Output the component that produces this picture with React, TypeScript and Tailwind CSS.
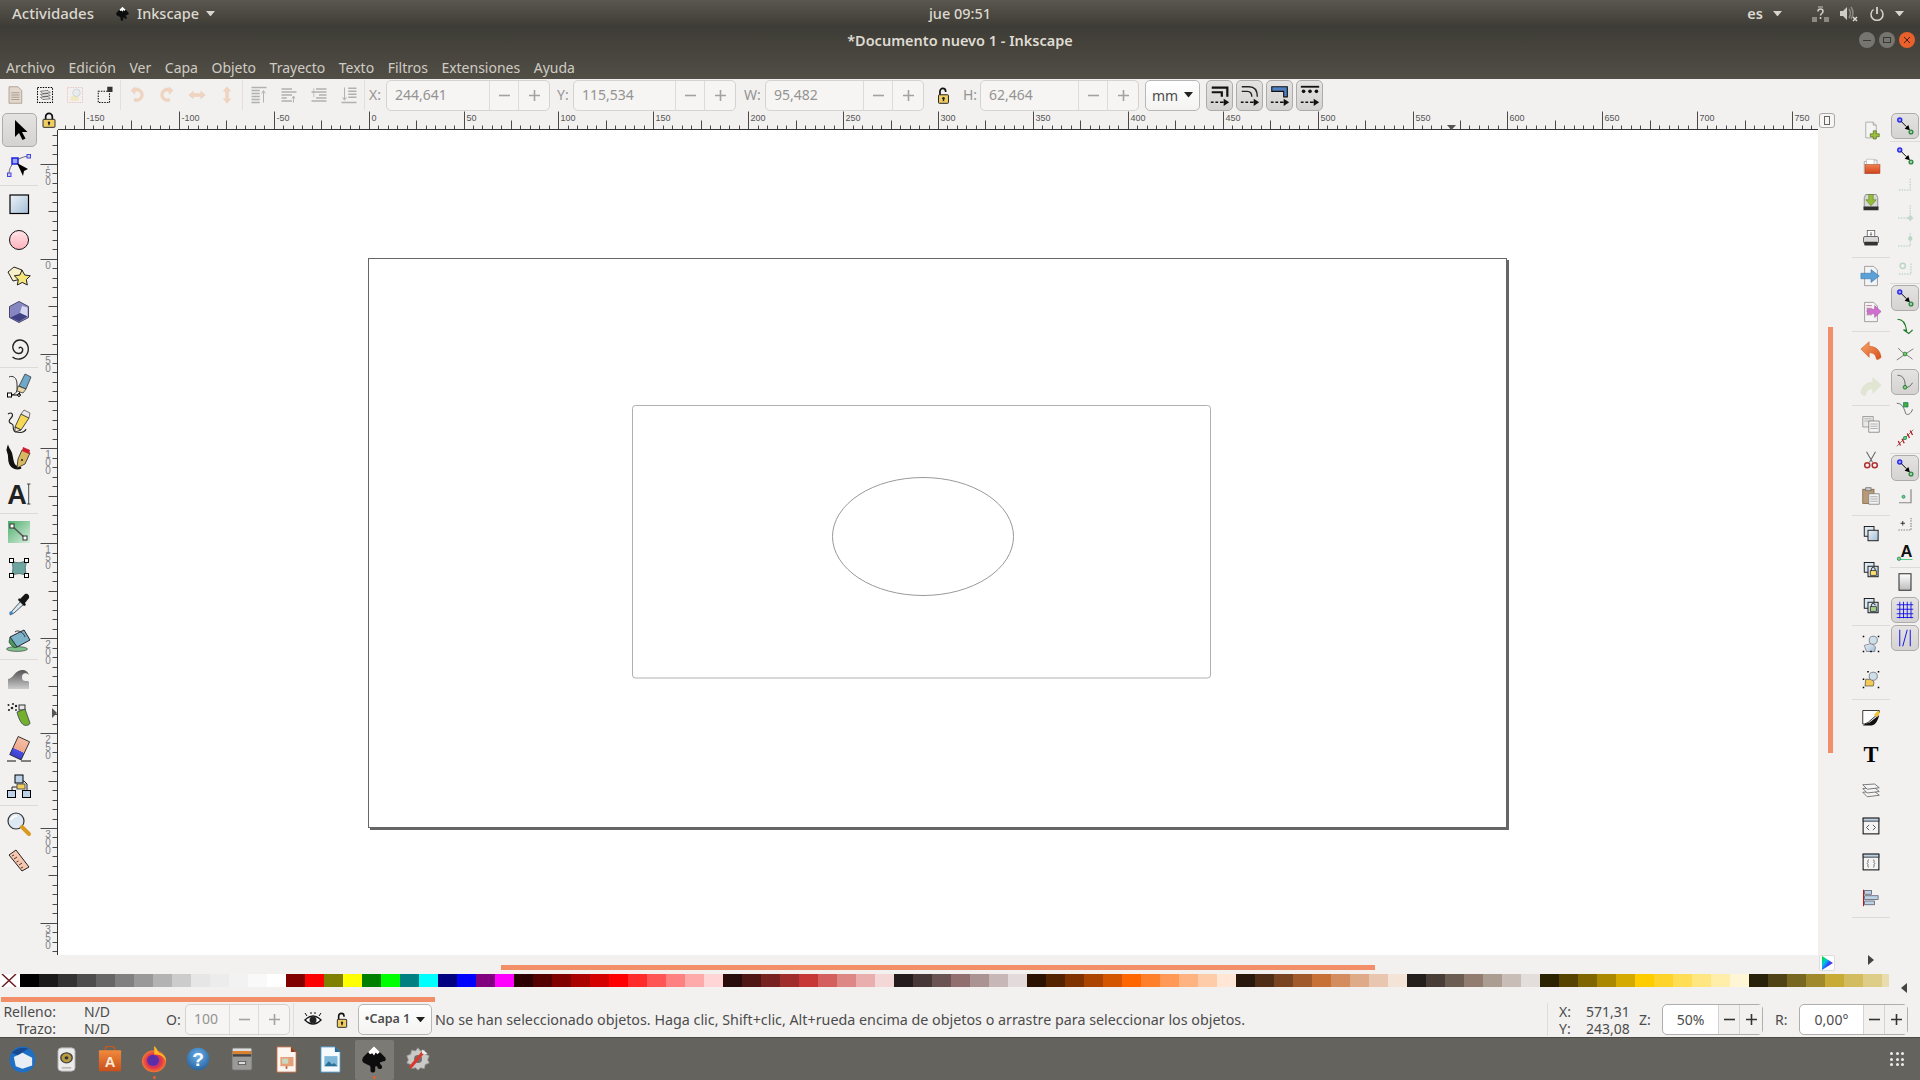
import React from "react";

const G = ["000000","1a1a1a","333333","4d4d4d","666666","808080","999999","b3b3b3","cccccc","e6e6e6","ececec","f2f2f2","f9f9f9","ffffff","800000","ff0000","808000","ffff00","008000","00ff00","008080","00ffff","000080","0000ff","800080","ff00ff","2b0000","550000","800000","aa0000","d40000","ff0000","ff2a2a","ff5555","ff8080","ffaaaa","ffd5d5","280b0b","501616","782121","a02c2c","c83737","d35f5f","de8787","e9afaf","f4d7d7","241c1c","483737","6c5353","916f6f","ac9393","c8b7b7","e3dbdb","2b1100","552200","803300","aa4400","d45500","ff6600","ff7f2a","ff9955","ffb380","ffccaa","ffe6d5","28170b","502d16","784421","a05a2c","c87137","d38d5f","deaa87","e9c6af","f4e3d7","241f1c","483e37","6c5d53","917c6f","ac9d93","c8beb7","e3dedb","2b2200","554400","806600","aa8800","d4aa00","ffcc00","ffd42a","ffdd55","ffe680","ffeeaa","fff6d5","28220b","504416","786721","a0892c","c8ab37","d3bc5f","decd87","e9ddaf"];

const S = ({ children, s = 24, o = 1 }: { children: React.ReactNode; s?: number; o?: number }) => (
  <svg width={s} height={s} viewBox="0 0 24 24" opacity={o} className="shrink-0 overflow-visible">{children}</svg>
);

const Defs = () => (
  <svg className="absolute w-0 h-0">
    <defs>
      <linearGradient id="blue" x1="0" y1="0" x2="1" y2="1"><stop offset="0" stopColor="#eef3f8" /><stop offset="1" stopColor="#a2bdd6" /></linearGradient>
      <linearGradient id="pink" x1="0" y1="0" x2="0" y2="1"><stop offset="0" stopColor="#ffe5e8" /><stop offset="1" stopColor="#ffb2bd" /></linearGradient>
      <linearGradient id="green" x1="0" y1="0" x2="1" y2="1"><stop offset="0" stopColor="#4fae6c" /><stop offset="1" stopColor="#d9efdf" /></linearGradient>
      <linearGradient id="erase" x1="0" y1="0" x2="0" y2="1"><stop offset="0" stopColor="#f3bfa6" /><stop offset="0.62" stopColor="#f0a88a" /><stop offset="0.63" stopColor="#4a50e8" /><stop offset="1" stopColor="#3a3ec8" /></linearGradient>
      <linearGradient id="wave" x1="0" y1="0" x2="0" y2="1"><stop offset="0" stopColor="#555" /><stop offset="1" stopColor="#ccc" /></linearGradient>
      <linearGradient id="btn" x1="0" y1="0" x2="0" y2="1"><stop offset="0" stopColor="#fff" /><stop offset="1" stopColor="#bbb" /></linearGradient>
      <linearGradient id="undo" x1="0" y1="0" x2="1" y2="1"><stop offset="0" stopColor="#f7a66a" /><stop offset="1" stopColor="#d8501a" /></linearGradient>
      <linearGradient id="wheel" x1="0" y1="0" x2="1" y2="1"><stop offset="0" stopColor="#00e000" /><stop offset="0.35" stopColor="#00c8e0" /><stop offset="0.6" stopColor="#3040ff" /><stop offset="1" stopColor="#ff2060" /></linearGradient>
      <linearGradient id="bag" x1="0" y1="0" x2="0" y2="1"><stop offset="0" stopColor="#f08a3c" /><stop offset="1" stopColor="#c9501a" /></linearGradient>
      <linearGradient id="folder" x1="0" y1="0" x2="0" y2="1"><stop offset="0" stopColor="#f08050" /><stop offset="1" stopColor="#d0441c" /></linearGradient>
      <radialGradient id="help" cx="0.5" cy="0.35" r="0.7"><stop offset="0" stopColor="#6fb0e8" /><stop offset="1" stopColor="#20609e" /></radialGradient>
      <radialGradient id="fox" cx="0.5" cy="0.5" r="0.6"><stop offset="0" stopColor="#7a3cc8" /><stop offset="0.5" stopColor="#e0334d" /><stop offset="1" stopColor="#ff9a1f" /></radialGradient>
    </defs>
  </svg>
);

/* ---------- tools ---------- */
const tools: Record<string, React.ReactNode> = {
  select: <S><path d="M7 2v17l4-4 3.500 7 3-1.500-3.500-6.500h5.500z" fill="#000" /></S>,
  node: <S><path d="M2 20C2 11 9 4 21 2" fill="none" stroke="#667" /><rect x="5" y="4" width="6" height="6" fill="#9aa8f0" stroke="#1f1fe0" strokeWidth="1.500" /><rect x="20" y="0.500" width="3.500" height="3.500" fill="#ccd" stroke="#44e" /><rect x="0.500" y="19" width="3.500" height="3.500" fill="#ccd" stroke="#44e" /><path d="M10 9l11 6-4 2-1 5z" fill="#000" /></S>,
  rect: <S><rect x="3" y="3" width="18.500" height="18.500" fill="url(#blue)" stroke="#000" strokeWidth="1.200" /></S>,
  circle: <S><circle cx="12" cy="12" r="9.500" fill="url(#pink)" stroke="#111" strokeWidth="1" /></S>,
  star: <S><path d="M1 8l6-5 8 3-1 9-8 2z" fill="#f7f0c8" stroke="#222" /><path d="M15 6l2.700 5 5.600.8-4 3.800 1 5.400-5-2.600-5 2.600 1-5.400-4-3.800 5.600-.8z" fill="#f5e57a" stroke="#222" /></S>,
  cube: <S><path d="M12 1.500l9.500 5v11l-9.500 5-9.500-5v-11z" fill="#8d8dc6" stroke="#444466" /><path d="M3.500 7l8.500-4.500 3 3.500-2 7-9 4.500z" fill="#8686c2" /><path d="M13 13l2-7 5.500 1.500v9z" fill="#d6d6ee" /><path d="M3.500 17.500l9.500-4.500 7.500 3.500-8.500 5z" fill="#3f3f84" /></S>,
  spiral: <S><path d="M12 12.500c.5-2.500 4.500-1 3.500 2.500s-7 3.500-9-1 1-10.500 7-10 9.500 7 7 13-10 8-15 4" fill="none" stroke="#222" strokeWidth="1.400" /></S>,
  pen: <S><path d="M2 3c4-2 8 1 8 7s1 9-5 11" fill="none" stroke="#333" /><rect x="0.500" y="19" width="4" height="4" fill="#fff" stroke="#000" /><path d="M4 21h8" stroke="#000" /><circle cx="12" cy="21" r="1.400" fill="#fff" stroke="#000" /><path d="M12 21l2-7" stroke="#000" /><path d="M18 0l6 3-5 12-7-3z" fill="#6fa8c8" stroke="#222" strokeWidth=".7" /><path d="M11 12l8 3-3 4-6-2z" fill="#e8d8a8" stroke="#222" strokeWidth=".7" /></S>,
  pencil: <S><path d="M1 4c4-3 6 1 3 4s-2 5 1 6-1 7 4 8 9 0 10-3" fill="none" stroke="#222" strokeWidth="1.100" /><path d="M14 4l8 4-8 12-6-3z" fill="#f5d856" stroke="#222" strokeWidth=".8" /><path d="M8 17l6 3-6 2z" fill="#f5e8c8" stroke="#222" strokeWidth=".8" /><path d="M17 0l6 3-1 5-8-4z" fill="#e8e8e8" stroke="#222" strokeWidth=".6" /></S>,
  calli: <S><path d="M1 1c2 5 3 3 4 10s2 10 9 11c-7 2-12-2-12-10S-1 6 1 1z" fill="#111" stroke="#111" strokeWidth="1.800" /><path d="M15 4l8 3-5 11-8 4 1-9z" fill="#d8b860" stroke="#222" strokeWidth=".8" /><path d="M16 1l7 3-1 4-7-3z" fill="#d02030" /><circle cx="15" cy="14" r="1" fill="#222" /></S>,
  text: <S><text x="10" y="22" textAnchor="middle" fontFamily="Liberation Sans" fontWeight="700" fontSize="27" fill="#222">A</text><path d="M20 2h3.500M21.700 2v20M20 22h3.500" stroke="#222" fill="none" strokeWidth=".8" /></S>,
  gradient: <S><rect x="1" y="1" width="22" height="22" fill="url(#green)" /><path d="M5 6l13 12" stroke="#555" strokeWidth="1.600" /><rect x="3" y="4" width="4" height="4" fill="#fff" stroke="#333" /><rect x="16" y="16" width="4" height="4" fill="#fff" stroke="#333" /></S>,
  mesh: <S><path d="M5 5q7 4 15-1-3 7-1 15-7-3-14 0 2-7 0-14z" fill="#6fa5a0" stroke="#244" strokeWidth=".6" /><g fill="#fff" stroke="#000" strokeWidth="1"><rect x="2.500" y="2.500" width="4" height="4" /><rect x="17.500" y="2.500" width="4" height="4" /><rect x="2.500" y="17.500" width="4" height="4" /><rect x="17.500" y="17.500" width="4" height="4" /></g></S>,
  dropper: <S><path d="M14 9l-9 10-2 4 4-2 10-9z" fill="#dce8f0" stroke="#234" strokeWidth=".8" /><circle cx="4" cy="21" r="1.800" fill="#4488c0" /><path d="M13 7l5-5c2-1 5 1 4 4l-4 5 1 2-2 1-6-6 1-2z" fill="#151515" /></S>,
  bucket: <S><ellipse cx="10" cy="21" rx="10.500" ry="2.400" fill="#7ec08a" stroke="#333" strokeWidth=".6" /><path d="M3 9l14-7 6 10-13 7z" fill="#7db3c8" stroke="#223" /><path d="M3 9l7 10c-2 2-6-1-8-5z" fill="#4a9a5c" stroke="#223" strokeWidth=".6" /><path d="M8 4c3-3 9 1 10 5" fill="none" stroke="#333" /></S>,
  tweak: <S><path d="M1 23V13c5 0 7-9 14-9 4 0 6 2 7 5-3-3-7-2-7 2s2 4 6 4l1 1v7z" fill="url(#wave)" /></S>,
  spray: <S><g fill="#222"><circle cx="1.500" cy="3" r="1" /><circle cx="6" cy="2" r="1" /><circle cx="5" cy="6" r="1.300" /><circle cx="9" cy="4" r="1.200" /><circle cx="2" cy="8" r="1.100" /><circle cx="9" cy="8" r=".9" /></g><rect x="12" y="3" width="6" height="5" fill="#e8e8e8" stroke="#333" /><path d="M10 10l8-3 5 14c0 2-4 3-6 2-3-1-6-8-7-13z" fill="#74b02e" stroke="#234" strokeWidth=".7" /></S>,
  eraser: <S><g transform="rotate(25 12 11)"><rect x="6" y="0" width="12.500" height="20" fill="url(#erase)" stroke="#222" strokeWidth=".8" /></g><path d="M0 23h9M14 23h10" stroke="#111" /></S>,
  connector: <S><path d="M12 10v3H5v4M12 7h5l3 3v7M12 13h4" stroke="#222" fill="none" /><rect x="8" y="1" width="8" height="8" fill="#bdd2e6" stroke="#000" /><rect x="10" y="10" width="8" height="5" fill="#f3cf58" stroke="#555" /><rect x="0.500" y="16.500" width="8" height="7" fill="#bdd2e6" stroke="#000" /><rect x="15.500" y="16.500" width="8" height="7" fill="#bdd2e6" stroke="#000" /></S>,
  zoom: <S><circle cx="9" cy="9" r="8" fill="#dce8f2" stroke="#333" strokeWidth="1.200" /><path d="M15 15l7 7" stroke="#d89a20" strokeWidth="4" strokeLinecap="round" /><path d="M4 8c1-3 3-4 6-4" stroke="#fff" strokeWidth="2" fill="none" /></S>,
  measure: <S><path d="M2 7l7-5 13 17-7 4z" fill="#f4c7ae" stroke="#222" /><path d="M5 8l2-1M7 11l3-2M9.500 14l2-1M12 17l3-2M14 20l2-1" stroke="#533" /></S>,
};

const toolOrder: (string | null)[] = ["node", null, "rect", "circle", "star", "cube", "spiral", null, "pen", "pencil", "calli", "text", null, "gradient", "mesh", "dropper", "bucket", null, "tweak", "spray", "eraser", "connector", null, "zoom", "measure"];

/* ---------- command bar ---------- */
const Doc = () => <path d="M5 1.500h10l4 4v17H5z" fill="#f4f4f4" stroke="#999" />;
const Copies = ({ extra }: { extra?: React.ReactNode }) => <S><rect x="3" y="2" width="13" height="13" fill="#dbe7f1" stroke="#111" strokeWidth="1.200" /><rect x="8" y="7" width="13.500" height="14" fill="url(#blue)" stroke="#111" strokeWidth="1.200" />{extra}</S>;

const cmds: Record<string, React.ReactNode> = {
  new: <S><Doc /><path d="M15 1.500v4h4" fill="#ddd" stroke="#999" /><path d="M15 13h4v4h4v4h-4v3h-4v-3h-4v-4h4z" fill="#9cbf3c" stroke="#456010" strokeWidth=".8" /></S>,
  open: <S><path d="M3 6h8l2-2h7v18H3z" fill="#f4f4f4" stroke="#999" /><path d="M6 3h10v8H6z" fill="#fff" stroke="#bbb" /><rect x="4" y="10" width="20" height="12" fill="url(#folder)" stroke="#a5391a" strokeWidth=".6" /></S>,
  save: <S><path d="M3 20V6l2-4h14l2 4v14z" fill="#d8d8d8" stroke="#777" /><rect x="2" y="18" width="20" height="5" fill="#2f2f2f" /><path d="M9 2h6v7h4l-7 8-7-8h4z" fill="#95bd3a" stroke="#55781a" strokeWidth=".7" /></S>,
  print: <S><rect x="7" y="2" width="10" height="9" fill="#fff" stroke="#555" /><path d="M12 4v4M10.500 6.500l1.500 2 1.500-2" stroke="#555" fill="none" /><rect x="2" y="10" width="20" height="9" rx="2" fill="#d9d9d9" stroke="#444" /><rect x="3" y="17" width="18" height="5" rx="1" fill="#333" /></S>,
  import: <S><Doc /><path d="M1 9h11V5l9 7-9 7v-4H1z" fill="#5ba0d6" stroke="#2f6fa8" strokeWidth=".6" /></S>,
  export: <S><Doc /><path d="M7 5h6M7 8h6M7 11h5M7 15h6" stroke="#b79" /><path d="M8 9h8V5l7 6.500-7 6.500v-4H8z" fill="#d06fd0" stroke="#a24ba2" strokeWidth=".6" /></S>,
  undo: <S><path d="M1 11l9-8v5c7 0 12 4 13 12-1 1-3 3-5 2-1-5-3-7-8-7v5z" fill="url(#undo)" stroke="#c8501a" strokeWidth=".6" /></S>,
  redo: <S o={.28}><path d="M23 11l-9-8v5C7 8 2 12 1 20c1 1 3 3 5 2 1-5 3-7 8-7v5z" fill="#b9cc8a" stroke="#9ab060" strokeWidth=".6" /></S>,
  copy: <S><path d="M1 2h14v14H1z" fill="#e8e8e8" stroke="#888" /><path d="M3 5h10M3 8h10" stroke="#aaa" /><path d="M9 8h14v15H9z" fill="#f4f4f4" stroke="#777" /><path d="M11 12h10M11 15h10M11 18h10" stroke="#999" /></S>,
  cut: <S><path d="M6 1l8 14M18 1l-8 14" stroke="#666" strokeWidth="1.400" /><circle cx="7" cy="19" r="3.400" fill="none" stroke="#b03030" strokeWidth="2" /><circle cx="17" cy="19" r="3.400" fill="none" stroke="#b03030" strokeWidth="2" /></S>,
  paste: <S><rect x="1" y="3" width="15" height="19" fill="#b99a78" stroke="#7d6040" /><rect x="5" y="1" width="7" height="4" fill="#ccc" stroke="#666" /><path d="M9 9h14v14H9z" fill="#f4f4f4" stroke="#777" /><path d="M11 13h10M11 16h10M11 19h10" stroke="#999" /></S>,
  dup: <Copies />,
  clone: <Copies extra={<><rect x="11" y="13" width="8" height="6" fill="#ffdf70" stroke="#000" strokeWidth=".8" /><path d="M12.500 13v-2a2.500 2.500 0 015 0v2" fill="none" stroke="#000" /></>} />,
  unlink: <Copies extra={<><rect x="11" y="13" width="8" height="6" fill="#a8d088" stroke="#000" strokeWidth=".8" /><path d="M12.500 13v-2a2.500 2.500 0 015 0" fill="none" stroke="#000" /></>} />,
  group: <S><path d="M3 14l10-3 5 5-1 6H6z" fill="url(#blue)" stroke="#445" strokeWidth=".7" /><circle cx="15" cy="7" r="5.400" fill="#cfdfea" stroke="#667" /><g fill="#000"><rect x="1" y="1" width="2" height="2" /><rect x="21" y="1" width="2" height="2" /><rect x="1" y="21" width="2" height="2" /><rect x="21" y="21" width="2" height="2" /><rect x="11" y="21" width="2" height="2" /></g></S>,
  ungroup: <S><path d="M5 11h8l3 4-1 5H4z" fill="#f3c958" stroke="#333" strokeWidth=".8" /><circle cx="15" cy="7" r="5.400" fill="#cfdfea" stroke="#667" /><g fill="#000"><rect x="7" y="0" width="2" height="2" /><rect x="21" y="0" width="2" height="2" /><rect x="1" y="21" width="2" height="2" /><rect x="21" y="21" width="2" height="2" /><rect x="1" y="10" width="2" height="2" /></g></S>,
  fill: <S><path d="M1 2h22v3L8 18l-5 2H1z" fill="#fff" stroke="#000" strokeWidth="1" /><path d="M1 22h12c5-1 8-6 10-14L10 18l-6 2z" fill="#111" /><path d="M16 8l5-6 3 3-4 6z" fill="#f2c230" /></S>,
  T: <S><text x="12" y="22" textAnchor="middle" fontFamily="Liberation Serif" fontWeight="700" fontSize="30" fill="#000">T</text></S>,
  layers: <S><g fill="#f4f4f4" stroke="#555"><path d="M1 15l16-1 6 5-16 2z" /><path d="M1 10l16-1 6 5-16 2z" /><path d="M1 5l16-1 6 5-16 2z" /></g></S>,
  xml: <S><rect x="1.500" y="1.500" width="21" height="21" fill="#f4f4f4" stroke="#111" strokeWidth="1.400" /><rect x="1.500" y="1.500" width="21" height="4" fill="#bcd0e2" stroke="#111" /><path d="M9.500 10.500L6 14l3.500 3.500M14.500 10.500L18 14l-3.500 3.500" fill="none" stroke="#555" strokeWidth="1.300" /></S>,
  style: <S><rect x="1.500" y="1.500" width="21" height="21" fill="#f4f4f4" stroke="#111" strokeWidth="1.400" /><rect x="1.500" y="1.500" width="21" height="4" fill="#bcd0e2" stroke="#111" /><path d="M9 9c-2 0-1 4-1 4l-1 1 1 1s-1 4 1 4M15 9c2 0 1 4 1 4l1 1-1 1s1 4-1 4" fill="none" stroke="#444" /></S>,
  align: <S><path d="M2 1v22" stroke="#b01c1c" strokeWidth="1.400" /><rect x="3.500" y="2" width="9" height="5" fill="#bcd2e6" stroke="#556" /><rect x="3.500" y="9" width="18" height="5" fill="#bcd2e6" stroke="#556" /><rect x="3.500" y="16" width="13" height="5" fill="#bcd2e6" stroke="#556" /></S>,
};

const cmdOrder: (string | null)[] = ["new", "open", "save", "print", null, "import", "export", null, "undo", "redo", null, "copy", "cut", "paste", null, "dup", "clone", "unlink", null, "group", "ungroup", null, "fill", "T", "layers", "xml", "style", "align", null];
const bigCmd = ["import", "export", "undo", "redo"];

/* ---------- snap bar ---------- */
const faint = "#c4d8cb";
const Snap = () => <S><circle cx="5" cy="4" r="2.600" fill="#aaf" stroke="#2a2af0" strokeWidth="2" /><path d="M7 6l7 7" stroke="#000" strokeWidth="1.300" /><path d="M18.500 17.500l-7-2 5-5z" fill="#000" /><circle cx="20" cy="20" r="2.500" fill="#aca" stroke="#2a8a40" strokeWidth="1.800" /></S>;
const snaps: Record<string, React.ReactNode> = {
  snap: <Snap />,
  f1: <S><path d="M4 20h15V4" fill="none" stroke={faint} strokeWidth="2" strokeDasharray="2 1.500" /></S>,
  f2: <S><path d="M3 20h16V3" fill="none" stroke={faint} strokeWidth="2" strokeDasharray="2 1.500" /><path d="M16 17h6v6h-6z" fill={faint} transform="rotate(45 19 20)" /></S>,
  f3: <S><path d="M3 20h16V3" fill="none" stroke={faint} strokeWidth="2" strokeDasharray="2 1.500" /><circle cx="19" cy="10" r="3" fill="#bcd6c4" /></S>,
  f4: <S><path d="M4 20h16V6" fill="none" stroke={faint} strokeWidth="2" strokeDasharray="2 1.500" /><circle cx="9" cy="9" r="3.500" fill="none" stroke="#bcd6c4" strokeWidth="2" /></S>,
  path: <S><path d="M2 3c7 0 11 6 12 15l-4-1 7 5c2-2 4-3 5-5" fill="none" stroke="#1d7a26" strokeWidth="1.600" /></S>,
  cross: <S><path d="M1 20L23 5M3 4c6 8 14 10 19 15" stroke="#666" strokeWidth="1.100" fill="none" /><circle cx="12" cy="12" r="2.500" fill="#6c6" stroke="#1d7a26" /></S>,
  curve: <S><path d="M2 3c8 0 11 7 10 17M22 13c-2 4-5 6-10 7" fill="none" stroke="#666" strokeWidth="1.300" /><circle cx="12" cy="19" r="2.500" fill="#8c8" stroke="#1d7a26" strokeWidth="1.200" /></S>,
  nodes: <S><path d="M1 3c8 0 10 8 12 14 2 2 7 1 9-6" fill="none" stroke="#666" strokeWidth="1.200" /><path d="M10 2h6v6h-6z" fill="#4a4" stroke="#185" /></S>,
  smooth: <S><path d="M1 23L23 1" stroke="#555" /><g stroke="#c01818" strokeWidth="1.700"><path d="M3 16l3 6M8 13l3 6M15 6l3 6M19 2l3 6" /></g><circle cx="12" cy="12" r="2.200" fill="#6c6" stroke="#186" /></S>,
  center: <S><path d="M4 21h16V3" fill="none" stroke="#888" strokeWidth="1.600" /><circle cx="10" cy="13" r="2" fill="#7c7" stroke="#186" /></S>,
  rot: <S><path d="M3 20h17V4" fill="none" stroke="#888" strokeWidth="1.600" strokeDasharray="2 1.500" /><path d="M9 8v6M6 11h6" stroke="#222" strokeWidth="1.200" /></S>,
  atext: <S><text x="14" y="19" textAnchor="middle" fontFamily="Liberation Sans" fontWeight="700" fontSize="22" fill="#111">A</text><path d="M2 22h20" stroke="#5c8" strokeWidth="1.400" /><circle cx="4" cy="21" r="2.300" fill="#8c8" stroke="#186" /></S>,
  page: <S><rect x="4" y="1" width="16" height="22" fill="url(#btn)" stroke="#333" strokeWidth="1.400" /></S>,
  grid: <S><path d="M1 5h22M1 11h22M1 17h22M1 22h22M5 1v22M10 1v22M15 1v22M20 1v22" stroke="#0000f0" strokeWidth="1.100" /></S>,
  guide: <S><path d="M5 1v22M19 1v22" stroke="#0000f0" strokeWidth="1.200" /><path d="M9 23L15 1" stroke="#0000f0" strokeWidth="1.200" /></S>,
};
type SnapItem = { k: string; on?: boolean } | null;
const snapOrder: SnapItem[] = [{ k: "snap", on: true }, null, { k: "snap" }, { k: "f1" }, { k: "f2" }, { k: "f3" }, { k: "f4" }, null, { k: "snap", on: true }, { k: "path" }, { k: "cross" }, { k: "curve", on: true }, { k: "nodes" }, { k: "smooth" }, null, { k: "snap", on: true }, { k: "center" }, { k: "rot" }, { k: "atext" }, null, { k: "page" }, { k: "grid", on: true }, { k: "guide", on: true }];

/* ---------- top toolbar ---------- */
const Dash = "2 1.500";
const topA = [
  <S key="a"><path d="M4 1h12l5 5v17H4z" fill="#e3d8cd" stroke="#a08f80" /><path d="M7 9h11M7 12h11M7 15h11M7 18h11" stroke="#9a8a7b" /></S>,
  <S key="b"><rect x="2" y="2" width="20" height="20" fill="none" stroke="#000" strokeWidth="1.400" strokeDasharray={Dash} /><path d="M6 7l10-1 3 3-10 1zM6 11l10-1 3 3-10 1zM6 15l10-1 3 3-10 1z" fill="#eee" stroke="#333" strokeWidth=".8" /></S>,
  <S key="c" o={.55}><rect x="2" y="2" width="20" height="20" fill="none" stroke="#d88" strokeDasharray={Dash} /><path d="M6 14l8-2 3 4v4H6z" fill="#f3e2a0" /><circle cx="14" cy="9" r="5" fill="#dfe8ee" stroke="#aab" /></S>,
  <S key="d"><rect x="3" y="7" width="15" height="15" fill="none" stroke="#111" strokeWidth="1.400" strokeDasharray={Dash} /><rect x="15" y="1" width="7" height="7" fill="#333" /></S>,
];
const RotIcon = ({ flip }: { flip?: boolean }) => <S o={.28}><g transform={flip ? "translate(24 0) scale(-1 1)" : undefined}><path d="M9 3a9 9 0 11-1 17l1-4a5 5 0 100-8v3L4 6l5-5z" fill="#ee8a44" stroke="#c8601c" strokeWidth=".5" /></g></S>;
const topB = [
  <RotIcon key="a" />, <RotIcon key="b" flip />,
  <S key="c" o={.28}><path d="M1 12l6-5v3h10V7l6 5-6 5v-3H7v3z" fill="#ee8a44" stroke="#c8601c" strokeWidth=".5" /></S>,
  <S key="d" o={.28}><path d="M12 1l5 6h-3v10h3l-5 6-5-6h3V7H7z" fill="#ee8a44" stroke="#c8601c" strokeWidth=".5" /></S>,
];
const ZL = "#b0b0ae";
const topC = [
  <S key="a"><path d="M2 2h20" stroke={ZL} strokeWidth="2" /><path d="M2 6h11M2 10h11M2 14h11M2 18h11M2 22h11" stroke={ZL} strokeWidth="2" /><path d="M18 22V7M15.500 10L18 6l2.500 4" stroke={ZL} strokeWidth="1.300" fill="none" /></S>,
  <S key="b"><path d="M2 4h14M2 8h20M2 12h14M2 16h7M2 20h14" stroke={ZL} strokeWidth="2" /><path d="M18 22v-8M16 16.500l2-3 2 3" stroke={ZL} strokeWidth="1.300" fill="none" /></S>,
  <S key="c"><path d="M8 4h14M2 8h20M12 12h10M8 16h14M2 20h20" stroke={ZL} strokeWidth="2" /><path d="M5 15V3" stroke={ZL} /></S>,
  <S key="d"><path d="M11 3h11M11 7h11M11 11h11M11 15h11" stroke={ZL} strokeWidth="2" /><path d="M2 22h20" stroke={ZL} strokeWidth="2" /><path d="M6 2v16M3.500 15L6 19l2.500-4" stroke={ZL} strokeWidth="1.300" fill="none" /></S>,
];
const ModeIcon = ({ v }: { v: number }) => (
  <S s={22}>
    {v === 0 && <path d="M3 4h17v10" fill="none" stroke="#111" strokeWidth="2.400" />}
    {v === 0 && <path d="M3 9h11v5" fill="none" stroke="#111" strokeWidth="2.400" />}
    {v === 1 && <path d="M3 3h8c6 0 9 4 9 11M3 8h6c4 0 5 3 5 6" fill="none" stroke="#222" strokeWidth="1.500" />}
    {v === 2 && <path d="M3 3h17v11H16V8H3z" fill="#4f7fc0" stroke="#111" strokeWidth="1.200" />}
    {v === 3 && <g fill="#111"><path d="M2 2h20v2H2z" /><circle cx="5" cy="8" r="2" /><circle cx="12" cy="8" r="2" /><circle cx="19" cy="8" r="2" /></g>}
    <path d="M2 20h3M7 20h3M12 20h4" stroke="#111" strokeWidth="1.600" />
    <path d="M16 16l6 4-6 4z" fill="#111" />
  </S>
);

const Padlock = ({ open, s = 18 }: { open?: boolean; s?: number }) => (
  <svg width={s} height={s} viewBox="0 0 24 24" className="shrink-0">
    {open ? <path d="M7 12V6a4 4 0 018 0v1" fill="none" stroke="#111" strokeWidth="2.400" /> : <path d="M7 12V7a5 5 0 0110 0v5" fill="none" stroke="#111" strokeWidth="2.600" />}
    <rect x={open ? 5 : 3} y="11" width={open ? 14 : 18} height="12" rx="1" fill="#f0ce62" stroke="#222" strokeWidth="1.400" />
    <circle cx="12" cy="16" r="1.800" fill="#222" /><path d="M11 16h2v4h-2z" fill="#222" />
  </svg>
);

const Glyph = ({ minus }: { minus?: boolean }) => (
  <svg width="11" height="11" viewBox="0 0 11 11"><path d={minus ? "M0 5.500h11" : "M0 5.500h11M5.500 0v11"} stroke="currentColor" strokeWidth="1.600" /></svg>
);
const Spin = ({ value, w }: { value: string; w: string }) => (
  <div className={`${w} flex h-[31px] shrink-0 rounded-[5px] border border-[#d6d2ce] bg-[#f6f5f4] text-[#949391]`}>
    <div className="flex-1 flex items-center pl-2 pb-[2px]">{value}</div>
    <div className="w-[29px] flex items-center justify-center border-l border-[#dedbd8] text-[#a3a2a0]"><Glyph minus /></div>
    <div className="w-[31px] flex items-center justify-center border-l border-[#dedbd8] text-[#a3a2a0]"><Glyph /></div>
  </div>
);
const SpinSmall = ({ value, w, textW }: { value: string; w: string; textW: string }) => (
  <div className={`${w} flex h-[31px] shrink-0 rounded-[5px] border border-[#b0aeac] bg-white text-[#4c4c4c]`}>
    <div className={`${textW} flex items-center justify-center`}>{value}</div>
    <div className="w-[21px] flex items-center justify-center border-l border-[#d6d4d1] bg-[#f2f1f0] text-[#333]"><Glyph minus /></div>
    <div className="flex-1 flex items-center justify-center border-l border-[#d6d4d1] bg-[#f2f1f0] text-[#333]"><Glyph /></div>
  </div>
);
const Caret = ({ c = "#222", w = 9 }: { c?: string; w?: number }) => (
  <svg width={w} height={w * 0.6} viewBox="0 0 10 6" className="shrink-0"><path d="M0 0h10L5 6z" fill={c} /></svg>
);
const VSep = () => <div className="w-px self-stretch my-px bg-[#e2dfdc] shrink-0" />;
const HSep = ({ w }: { w: string }) => <div className={`${w} h-[2px] flex items-center shrink-0`}><div className="h-px w-full bg-[#dddbd8]" /></div>;

const Toggled = ({ children, cls }: { children: React.ReactNode; cls: string }) => (
  <div className={`${cls} flex items-center justify-center rounded-[5px] border border-[#aeacaa] bg-gradient-to-b from-[#e4e3e1] to-[#d4d3d1]`}>{children}</div>
);

/* ---------- rulers ---------- */
const STEP = 94.9 / 10;
const HRuler = () => {
  const ticks: React.ReactNode[] = [];
  const ox = 310.6;
  for (let i = -33; i < 160; i++) {
    const x = Math.round(ox + i * STEP) + 0.5;
    if (x < 0 || x > 1760) continue;
    const m = ((i % 10) + 10) % 10;
    const h = m === 0 ? 18 : m === 5 ? 9 : 4;
    ticks.push(<path key={i} d={`M${x} 18.500v-${h}`} stroke="#4a4a4a" />);
    if (m === 0) ticks.push(<text key={"t" + i} x={x + 2} y={10} fontSize="9" fontFamily="Liberation Sans" fill="#555">{i * 5}</text>);
  }
  return (
    <svg width="1760" height="19" className="shrink-0">
      {ticks}
      <path d="M0 18.500h1760" stroke="#333" />
      <path d="M1389 14h9l-4.500 5z" fill="#555" />
    </svg>
  );
};
const VRuler = () => {
  const ticks: React.ReactNode[] = [];
  const oy = 128.6;
  for (let i = -13; i < 75; i++) {
    const y = Math.round(oy + i * STEP) + 0.5;
    if (y < 0 || y > 825) continue;
    const m = ((i % 10) + 10) % 10;
    const w = m === 0 ? 17 : m === 5 ? 9 : 5;
    ticks.push(<path key={i} d={`M17.500 ${y}h-${w}`} stroke="#4a4a4a" />);
    if (m === 0) {
      const label = String(i * 5).split("");
      let yy = y + 9;
      label.forEach((ch, j) => {
        ticks.push(<text key={`t${i}-${j}`} x={8} y={yy} textAnchor="middle" fontSize="10" fontFamily="Liberation Sans" fill="#7d8086">{ch === "-" ? "'" : ch}</text>);
        yy += ch === "-" ? 3 : 8;
      });
    }
  }
  return (
    <svg width="18" height="825" className="shrink-0">
      {ticks}
      <path d="M17.500 0v825" stroke="#333" />
      <path d="M17 583l-5-5v10z" fill="#555" />
    </svg>
  );
};

/* ---------- dock ---------- */
const Ink = ({ s }: { s: number }) => (
  <svg width={s} height={s} viewBox="0 0 24 24" className="shrink-0">
    <path d="M12 1L21 10C23 12 22 14 20 14L17 15C17 17 19 17 19 19C19 21 15 21 15 19C15 18 13 18 13 19L13 22C13 24 9 24 9 22L9 19C9 17 6 17 5 16C2 15 1 13 3 10Z" fill="#0d0d0d" />
    <path d="M12 1L17 6L15 8L13.500 6.500L12 9L10.500 7L8.500 8L7 6Z" fill="#fff" />
  </svg>
);
const dock: React.ReactNode[] = [
  <svg key="tb" width="27" height="27" viewBox="0 0 28 32" preserveAspectRatio="none"><ellipse cx="14" cy="16" rx="13.500" ry="15.500" fill="#1f6fc4" /><path d="M5 13l9-5 10 6v9l-10 4-7-3z" fill="#e9eef5" /><path d="M3 8C8 2 14 1 20 3L9 11z" fill="#184a92" /></svg>,
  <svg key="rb" width="19" height="25" viewBox="0 0 20 30" preserveAspectRatio="none"><rect x="1" y="1" width="18" height="28" rx="4" fill="#ececec" stroke="#aaa" /><circle cx="10" cy="13" r="6" fill="#b89a40" stroke="#444" strokeWidth="1.500" /><circle cx="10" cy="13" r="2" fill="#333" /><rect x="5" y="24" width="10" height="2" fill="#bbb" /></svg>,
  <svg key="sw" width="24" height="26" viewBox="0 0 26 30" preserveAspectRatio="none"><path d="M8 6V3a5 3 0 0110 0v3" fill="none" stroke="#c9581f" strokeWidth="1.500" /><rect x="1" y="5" width="24" height="24" rx="1" fill="url(#bag)" /><text x="13" y="24" textAnchor="middle" fontFamily="Liberation Sans" fontWeight="700" fontSize="16" fill="#fbe9da">A</text></svg>,
  <svg key="ff" width="26" height="27" viewBox="0 0 28 32" preserveAspectRatio="none"><circle cx="14" cy="18" r="13" fill="url(#fox)" /><path d="M14 0c5 4 3 8 8 9 3 2 5 5 5 9-3-7-7-8-13-8 1-3 0-6 0-10z" fill="#ffb81f" /><circle cx="13" cy="17" r="6.500" fill="#5b2ea8" /></svg>,
  <svg key="hp" width="24" height="24" viewBox="0 0 30 30"><circle cx="15" cy="15" r="14" fill="url(#help)" /><text x="15" y="24" textAnchor="middle" fontFamily="Liberation Sans" fontWeight="700" fontSize="24" fill="#fff">?</text></svg>,
  <svg key="fm" width="22" height="24" viewBox="0 0 24 30" preserveAspectRatio="none"><rect x="1" y="1" width="22" height="28" rx="2" fill="#9a9a98" stroke="#666" /><rect x="2" y="2" width="20" height="3" fill="#ddd" /><rect x="2" y="5" width="20" height="4" fill="#d9812e" /><rect x="2" y="9" width="20" height="3" fill="#444" /><rect x="8" y="18" width="8" height="4" fill="#ddd" stroke="#555" /></svg>,
  <svg key="im" width="21" height="27" viewBox="0 0 24 32" preserveAspectRatio="none"><path d="M1 1h16l6 6v24H1z" fill="#fbf6f2" stroke="#b2562c" /><path d="M17 1l6 6h-6z" fill="#8f3f1c" /><rect x="5" y="13" width="15" height="11" fill="#e5a07a" /><rect x="7" y="15" width="7" height="6" fill="#c9d9c0" /><path d="M12 24v3" stroke="#b2562c" strokeWidth="2" /></svg>,
  <svg key="wr" width="21" height="27" viewBox="0 0 24 32" preserveAspectRatio="none"><path d="M1 1h16l6 6v24H1z" fill="#f7fafc" stroke="#3a82b8" /><path d="M17 1l6 6h-6z" fill="#246a9c" /><rect x="5" y="12" width="15" height="12" fill="#7fb8d8" /><path d="M5 24l5-6 4 4 2-2 4 4z" fill="#2a6f98" /></svg>,
  <Ink key="ink" s={28} />,
  <svg key="tl" width="24" height="24" viewBox="0 0 30 30"><path d="M15 1l3 4 5-1 1 5 5 2-2 5 2 4-5 2-1 5-5-1-3 3-3-3-5 1-1-5-5-2 2-4-2-5 5-2 1-5 5 1z" fill="#c9c9c7" stroke="#999" /><circle cx="15" cy="15" r="5" fill="#6e6e6c" /><path d="M5 26L22 6" stroke="#d83a30" strokeWidth="4" /><path d="M20 3l7 5-3 1-4-1z" fill="#eee" /></svg>,
];

export default function App() {
  return (
    <div className="relative w-[1920px] h-[1080px] overflow-hidden flex flex-col bg-[#f2f1f0] text-[14px] text-[#4c4c4c] font-['Noto_Sans',sans-serif]">
      <Defs />
      {/* GNOME panel */}
      <div className="h-[27px] shrink-0 grid grid-cols-[1fr_auto_1fr] items-center bg-gradient-to-b from-[#5a574f] to-[#3e3c36] text-[14.500px] font-medium text-[#dcd8cf]">
        <div className="flex items-center">
          <span className="ml-3 w-[103px] text-[15px]">Actividades</span>
          <Ink s={15} />
          <span className="ml-[7px] w-[69px]">Inkscape</span>
          <Caret c="#d8d5ce" />
        </div>
        <span>jue 09:51</span>
        <div className="flex items-center justify-end">
          <span className="font-semibold">es</span>
          <span className="ml-[10px]"><Caret c="#d8d5ce" /></span>
          <svg width="18" height="16" viewBox="0 0 18 16" className="ml-[30px]"><rect x="0" y="11" width="5" height="5" fill="#8b8981" /><rect x="12" y="11" width="5" height="5" fill="#8b8981" /><rect x="6" y="0" width="5" height="2" fill="#8b8981" /><path d="M6 5.500a2.500 2.500 0 115 0c0 2-2.500 2-2.500 4M8.500 11v2" fill="none" stroke="#cfccc5" strokeWidth="1.600" /></svg>
          <svg width="18" height="16" viewBox="0 0 18 16" className="ml-[10px]"><path d="M0 5h3l4-4v13l-4-4H0z" fill="#cfccc5" /><path d="M9 3q3 4 0 9M11 1q4 6 0 12" stroke="#8b8981" fill="none" strokeWidth="1.500" /><path d="M13 11l4 4M17 11l-4 4" stroke="#dedbd4" strokeWidth="1.500" /></svg>
          <svg width="16" height="16" viewBox="0 0 16 16" className="ml-[11px]"><path d="M8 1v7" stroke="#d8d5ce" strokeWidth="1.800" /><path d="M4.500 3.500a6 6 0 107 0" stroke="#d8d5ce" strokeWidth="1.500" fill="none" /></svg>
          <span className="ml-[10px] mr-[16px]"><Caret c="#d8d5ce" /></span>
        </div>
      </div>

      {/* Title + menu */}
      <div className="h-[52px] shrink-0 flex flex-col bg-gradient-to-b from-[#3e3c36] to-[#514e46]">
        <div className="h-[28px] shrink-0 grid grid-cols-[1fr_auto_1fr] items-center">
          <div />
          <span className="text-[14.500px] font-semibold text-[#dfdbd2]">*Documento nuevo 1 - Inkscape</span>
          <div className="flex items-center justify-end gap-1 pr-[5px] pb-[2px]">
            <div className="size-4 rounded-full bg-[#777570] flex items-center justify-center"><div className="w-2 h-px bg-[#3a3934]" /></div>
            <div className="size-4 rounded-full bg-[#777570] flex items-center justify-center"><div className="w-2 h-[6px] border border-[#3a3934]" /></div>
            <div className="size-4 rounded-full bg-[#e9602c] flex items-center justify-center"><svg width="8" height="8" viewBox="0 0 8 8"><path d="M1 1l6 6M7 1L1 7" stroke="#4a2010" /></svg></div>
          </div>
        </div>
        <div className="flex items-center h-[24px] pl-[6px] gap-[13.500px] text-[14px] text-[#d0ccc4]">
          {["Archivo", "Edición", "Ver", "Capa", "Objeto", "Trayecto", "Texto", "Filtros", "Extensiones", "Ayuda"].map((m) => <span key={m}>{m}</span>)}
        </div>
      </div>

      {/* Command toolbar */}
      <div className="h-[32px] shrink-0 flex items-center">
        {topA.map((ic, i) => <div key={i} className="w-[30px] flex justify-center [&>svg]:size-[18px]">{ic}</div>)}
        <VSep />
        <div className="w-px" />
        {topB.map((ic, i) => <div key={i} className="w-[30px] flex justify-center [&>svg]:size-[18px]">{ic}</div>)}
        <VSep />
        <div className="w-px" />
        {topC.map((ic, i) => <div key={i} className="w-[30px] flex justify-center [&>svg]:size-[18px]">{ic}</div>)}
        <VSep />
        <span className="w-[21px] pl-1 pb-[2px] text-[#959492]">X:</span>
        <Spin value="244,641" w="w-[164px]" />
        <span className="w-[23px] pl-[7px] pb-[2px] text-[#959492]">Y:</span>
        <Spin value="115,534" w="w-[163px]" />
        <span className="w-[29px] pl-2 pb-[2px] text-[#959492]">W:</span>
        <Spin value="95,482" w="w-[159px]" />
        <div className="w-[39px] flex justify-center"><Padlock open s={17} /></div>
        <span className="w-[17px] pb-[2px] text-[#959492]">H:</span>
        <Spin value="62,464" w="w-[159px]" />
        <div className="ml-[6px] w-[55px] h-[31px] rounded-[5px] border border-[#b9b7b5] bg-gradient-to-b from-[#ffffff] to-[#f4f3f2] flex items-center justify-center gap-[6px] text-[#4c4c4c]">mm <Caret /></div>
        <div className="ml-[6px] flex gap-[3px]">
          {[0, 1, 2, 3].map((v) => <Toggled key={v} cls="w-[27px] h-[31px]"><ModeIcon v={v} /></Toggled>)}
        </div>
      </div>

      {/* Main row */}
      <div className="h-[860px] shrink-0 flex">
        {/* Toolbox */}
        <div className="w-[40px] shrink-0 flex flex-col pt-px">
          <div className="h-[36px] flex items-center pl-[2px]"><Toggled cls="w-[35px] h-[34px]">{tools.select}</Toggled></div>
          {toolOrder.map((t, i) => t ? <div key={i} className="h-[36px] w-[38px] flex items-center justify-center">{tools[t]}</div> : <HSep key={i} w="w-[38px]" />)}
        </div>
        {/* Center */}
        <div className="w-[1778px] shrink-0 flex flex-col">
          <div className="h-[19px] shrink-0 flex">
            <div className="w-[18px] flex items-start pt-[1px] pl-[1px]"><Padlock s={16} /></div>
            <HRuler />
          </div>
          <div className="h-[825px] shrink-0 flex">
            <VRuler />
            <div className="relative flex-1 bg-white overflow-hidden">
              {/* page on the free canvas */}
              <div className="absolute left-[310px] top-[128px] w-[1139px] h-[570px] border border-[#666] shadow-[2px_2px_0_#666] bg-white">
                <svg width="1137" height="568">
                  <rect x="263.500" y="146.500" width="578" height="272.500" rx="3" fill="none" stroke="#b0b0b0" />
                  <ellipse cx="554" cy="277.500" rx="90.500" ry="59" fill="none" stroke="#999" />
                </svg>
              </div>
            </div>
          </div>
          <div className="pt-[10px]">
            <div className="ml-[461px] w-[874px] h-[5px] bg-[#f28f68]" />
          </div>
        </div>
        {/* Scroll gutter */}
        <div className="w-[20px] shrink-0 flex flex-col">
          <div className="mt-[2px] ml-px w-[16px] h-[15px] rounded-[3px] border border-[#a9a7a5] bg-[#f6f5f4] flex items-center justify-center"><div className="w-[6px] h-[9px] border border-[#666]" /></div>
          <div className="mt-[199px] ml-[10px] w-[5px] h-[426px] shrink-0 bg-[#f28f68]" />
          <div className="mt-[202px] ml-px w-[16px] h-[16px] rounded-[2px] bg-white border border-[#ddd] flex items-center justify-center">
            <svg width="13" height="14" viewBox="0 0 13 14"><path d="M1 0l11 7-11 7z" fill="url(#wheel)" /></svg>
          </div>
        </div>
        {/* Commands */}
        <div className="w-[52px] shrink-0 flex flex-col items-end pt-px">
          {cmdOrder.map((c, i) => c ? <div key={i} className={`h-[36px] w-[38px] flex items-center justify-center ${bigCmd.includes(c) ? "[&>svg]:size-[22px]" : "[&>svg]:size-[18px]"}`}>{cmds[c]}</div> : <HSep key={i} w="w-[38px]" />)}
          <div className="mt-[37px] mr-[16px] w-0 h-0 border-y-[5px] border-y-transparent border-l-[6px] border-l-[#444]" />
        </div>
        {/* Snap */}
        <div className="w-[30px] shrink-0 flex flex-col pt-px">
          {snapOrder.map((c, i) => c ? <div key={i} className="h-[28px] flex items-center justify-center [&_svg]:size-[18px]">{c.on ? <Toggled cls="w-[28px] h-[26px]">{snaps[c.k]}</Toggled> : snaps[c.k]}</div> : <HSep key={i} w="w-[30px]" />)}
        </div>
      </div>

      {/* Palette */}
      <div className="h-[31px] shrink-0 flex flex-col">
        <div className="mt-[3px] h-[13px] flex">
          <div className="w-[20px] h-[13px] shrink-0 bg-white">
            <svg width="20" height="13"><path d="M2 0l14 13M16 0L2 13" stroke="#6e2020" strokeWidth="1.500" /></svg>
          </div>
          <div className="flex w-[1869px] overflow-hidden">
            {G.map((c, i) => <div key={i} className="w-[19px] h-[13px] shrink-0" style={{ background: "#" + c }} />)}
          </div>
          <div className="ml-[12px] mt-[9px] w-0 h-0 border-y-[5px] border-y-transparent border-r-[6px] border-r-[#444]" />
        </div>
        <div className="mt-[10px] ml-px w-[434px] h-[5px] bg-[#f28f68]" />
      </div>

      {/* Status bar */}
      <div className="h-[35px] shrink-0 flex items-center">
        <div className="w-[56px] shrink-0 text-right leading-[17px] mt-[1px]"><div>Relleno:</div><div>Trazo:</div></div>
        <div className="ml-[28px] w-[82px] shrink-0 leading-[17px] mt-[1px]"><div>N/D</div><div>N/D</div></div>
        <span className="w-[19px] shrink-0">O:</span>
        <div className="w-[105px] shrink-0"><Spin value="100" w="w-[105px]" /></div>
        <div className="ml-[3px] h-[33px] w-px bg-[#dfdcd9] shrink-0" />
        <div className="w-[37px] shrink-0 flex justify-center">
          <svg width="18" height="16" viewBox="0 0 18 16"><path d="M1 8q8-8 16 0-8 8-16 0z" fill="#fff" stroke="#111" strokeWidth="1.400" /><circle cx="9" cy="8" r="3.500" fill="#222" /><path d="M3 4L1 1M7 2V0M11 2V0M15 4l2-3" stroke="#111" /></svg>
        </div>
        <div className="w-[21px] shrink-0 flex justify-center"><Padlock open s={16} /></div>
        <div className="ml-[6px] w-[74px] h-[31px] shrink-0 rounded-[5px] border border-[#b9b7b5] bg-gradient-to-b from-[#ffffff] to-[#f4f3f2] flex items-center justify-center gap-[6px] text-[12.500px] font-semibold">•Capa 1 <Caret /></div>
        <span className="ml-[3px] w-[1112px] shrink-0 whitespace-nowrap text-[14.300px]">No se han seleccionado objetos. Haga clic, Shift+clic, Alt+rueda encima de objetos o arrastre para seleccionar los objetos.</span>
        <div className="h-[33px] w-px bg-[#dfdcd9] shrink-0" />
        <div className="ml-[11px] w-[27px] shrink-0 leading-[17px] mt-[1px]"><div>X:</div><div>Y:</div></div>
        <div className="w-[43px] shrink-0 text-right leading-[17px] mt-[1px]"><div>571,31</div><div>243,08</div></div>
        <span className="ml-[10px] w-[23px] shrink-0">Z:</span>
        <SpinSmall value="50%" w="w-[101px]" textW="w-[55px]" />
        <span className="ml-[12px] w-[24px] shrink-0">R:</span>
        <SpinSmall value="0,00°" w="w-[109px]" textW="w-[63px]" />
      </div>

      {/* Dock */}
      <div className="h-[43px] shrink-0 flex items-center bg-[#65635d] border-t border-[#4b4a45]">
        {dock.map((ic, i) => (
          <div key={i} className="relative w-[44px] h-[41px] flex items-center justify-center">
            {i === 8 && <div className="absolute left-[3px] right-[2px] top-px bottom-0 rounded-[2px] bg-[#7c7a75]" />}
            <div className="relative flex items-center justify-center">{ic}</div>
            {(i === 3 || i === 8) && <div className="absolute bottom-[1px] left-1/2 -ml-[1.500px] size-[3px] rounded-full bg-[#e9602c]" />}
          </div>
        ))}
        <div className="ml-auto mr-[16px] grid grid-cols-3 gap-[2.500px]">
          {Array.from({ length: 9 }).map((_, i) => <div key={i} className="size-[3px] rounded-full bg-[#eeeeec]" />)}
        </div>
      </div>
    </div>
  );
}
